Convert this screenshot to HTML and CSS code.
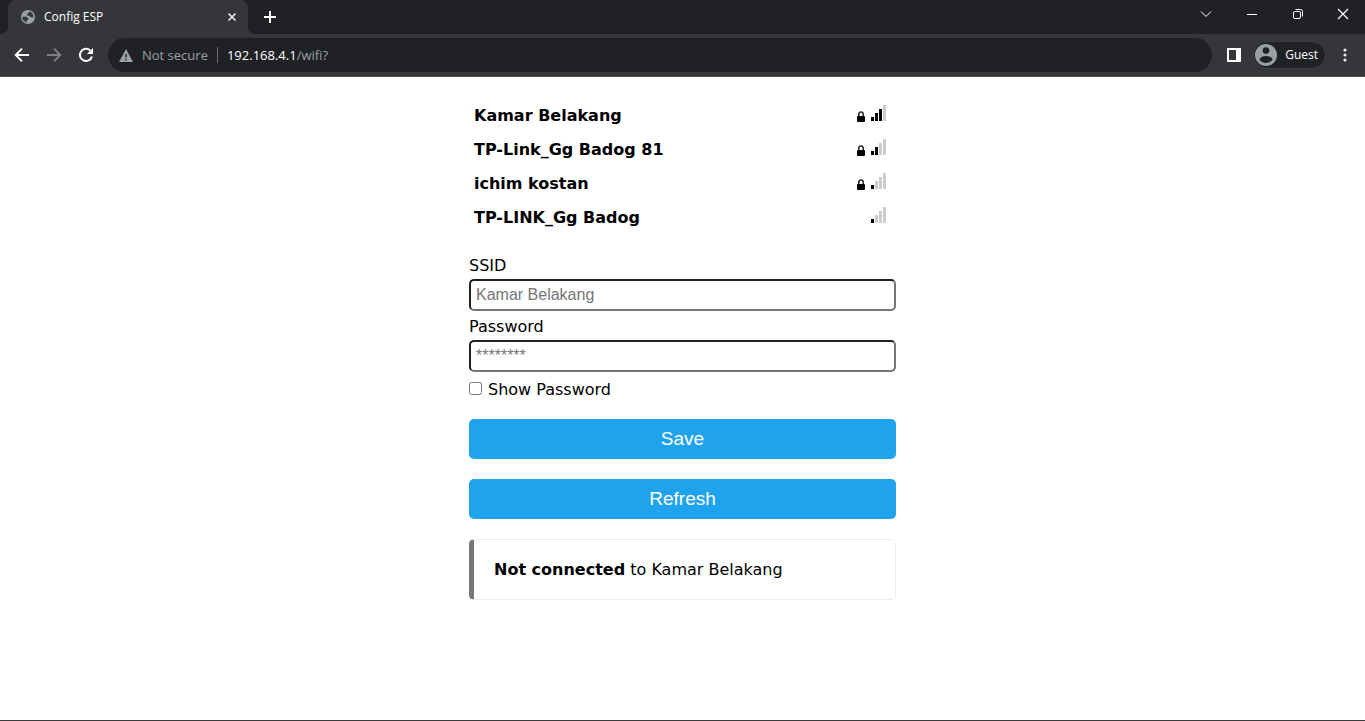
FILE: index.html
```html
<!DOCTYPE html>
<html lang="en">
<head>
<meta charset="utf-8">
<meta name="viewport" content="width=device-width, initial-scale=1">
<title>Config ESP</title>
<link rel="stylesheet" href="styles.css">
</head>
<body>
<header class="browser">
  <div class="tabstrip">
    <div class="tab">
      <svg class="favicon" width="14" height="14" viewBox="0 0 14 14" aria-hidden="true"><circle cx="7" cy="7" r="7" fill="#9aa0a6"/><path d="M8 1.400 7.600 3 6 4v1.500l2.200.3 1.300 1.400h2.800A5.600 5.600 0 0 0 8 1.400zM1.400 6.800h4l1.800 1.500v1.400l-1.500.9v1.800A5.600 5.600 0 0 1 1.400 6.800z" fill="#35363a"/></svg>
      <span class="tab-title">Config ESP</span>
      <button class="icon-btn tab-close" type="button" aria-label="Close tab"><svg width="16" height="16" viewBox="0 0 16 16"><path d="M4.500 4.500l7 7M11.500 4.500l-7 7" stroke="#e8eaed" stroke-width="1.700"/></svg></button>
    </div>
    <button class="icon-btn new-tab" type="button" aria-label="New tab"><svg width="28" height="28" viewBox="0 0 28 28"><path d="M14 8v12M8 14h12" stroke="#fff" stroke-width="2"/></svg></button>
    <div class="window-controls">
      <button class="icon-btn win-btn" type="button" aria-label="Search tabs"><svg width="12" height="12" viewBox="0 0 12 12"><path d="M1 3.500l5 5 5-5" fill="none" stroke="#fff"/></svg></button>
      <button class="icon-btn win-btn" type="button" aria-label="Minimize"><svg width="12" height="12" viewBox="0 0 12 12"><path d="M1 6.500h10" stroke="#fff"/></svg></button>
      <button class="icon-btn win-btn" type="button" aria-label="Restore"><svg width="12" height="12" viewBox="0 0 12 12" fill="none" stroke="#fff"><rect x="1.500" y="3.500" width="7" height="7" rx="1.500"/><path d="M3.500 1.500h5a2 2 0 0 1 2 2v5"/></svg></button>
      <button class="icon-btn win-btn" type="button" aria-label="Close"><svg width="12" height="12" viewBox="0 0 12 12"><path d="M1 1l10 10M11 1L1 11" stroke="#fff" stroke-width="1.200"/></svg></button>
    </div>
  </div>
  <div class="toolbar">
    <button class="icon-btn nav-btn" type="button" aria-label="Back"><svg width="16" height="16" viewBox="0 0 16 16"><path d="M15 8H2M8 1.700L1.700 8 8 14.300" fill="none" stroke="#fff" stroke-width="1.900"/></svg></button>
    <button class="icon-btn nav-btn" type="button" aria-label="Forward"><svg width="16" height="16" viewBox="0 0 16 16"><path d="M1 8h13M8 1.700L14.300 8 8 14.300" fill="none" stroke="#808185" stroke-width="1.900"/></svg></button>
    <button class="icon-btn nav-btn" type="button" aria-label="Reload"><svg width="16" height="16" viewBox="0 0 16 16"><path d="M13.900 9.500A6.100 6.100 0 1 1 12.300 3.600" fill="none" stroke="#fff" stroke-width="2"/><path d="M15 1v6H9z" fill="#fff"/></svg></button>
    <div class="address">
      <svg width="14" height="13" viewBox="0 0 14 13" aria-hidden="true"><path d="M7 0l7 13H0z" fill="#9aa0a6"/><path d="M6.300 5h1.400v3.600H6.300zM6.300 9.800h1.400v1.400H6.300z" fill="#202124"/></svg>
      <span class="security">Not secure</span>
      <span class="url"><span class="host">192.168.4.1</span>/wifi?</span>
    </div>
    <button class="icon-btn panel-btn" type="button" aria-label="Side panel"><svg width="14" height="14" viewBox="0 0 14 14"><path fill-rule="evenodd" d="M0 0h14v14H0zM2 2v10h7V2z" fill="#fff"/></svg></button>
    <button class="profile" type="button"><svg width="22" height="22" viewBox="0 0 22 22" aria-hidden="true"><circle cx="11" cy="11" r="11" fill="#9aa0a6"/><circle cx="11" cy="6.600" r="3.300" fill="#202124"/><path d="M4.400 15.500c1.600-4.600 11.600-4.600 13.200 0-2.500 4.500-10.700 4.500-13.200 0z" fill="#202124"/></svg><span>Guest</span></button>
    <button class="icon-btn menu-btn" type="button" aria-label="Menu"><svg width="4" height="14" viewBox="0 0 4 14" fill="#e8eaed"><circle cx="2" cy="2" r="1.600"/><circle cx="2" cy="7" r="1.600"/><circle cx="2" cy="12" r="1.600"/></svg></button>
  </div>
</header>
<main class="page">
  <div class="config">
    <ul class="networks">
      <li class="network"><a class="ssid" href="#ssid">Kamar Belakang</a><svg class="lock" width="8" height="11" viewBox="0 0 8 11" role="img" aria-label="Secured"><path d="M1.800 6V3.200a2.200 2.200 0 0 1 4.400 0V6" fill="none" stroke="#222" stroke-width="1.500"/><rect y="5" width="8" height="6" rx="1"/></svg><span class="signal level-3"><i></i><i></i><i></i><i></i></span></li>
      <li class="network"><a class="ssid" href="#ssid">TP-Link_Gg Badog 81</a><svg class="lock" width="8" height="11" viewBox="0 0 8 11" role="img" aria-label="Secured"><path d="M1.800 6V3.200a2.200 2.200 0 0 1 4.400 0V6" fill="none" stroke="#222" stroke-width="1.500"/><rect y="5" width="8" height="6" rx="1"/></svg><span class="signal level-2"><i></i><i></i><i></i><i></i></span></li>
      <li class="network"><a class="ssid" href="#ssid">ichim kostan</a><svg class="lock" width="8" height="11" viewBox="0 0 8 11" role="img" aria-label="Secured"><path d="M1.800 6V3.200a2.200 2.200 0 0 1 4.400 0V6" fill="none" stroke="#222" stroke-width="1.500"/><rect y="5" width="8" height="6" rx="1"/></svg><span class="signal level-1"><i></i><i></i><i></i><i></i></span></li>
      <li class="network"><a class="ssid" href="#ssid">TP-LINK_Gg Badog</a><span class="signal level-1"><i></i><i></i><i></i><i></i></span></li>
    </ul>
    <form class="form">
      <label class="label" for="ssid">SSID</label>
      <input class="field" id="ssid" type="text" placeholder="Kamar Belakang">
      <label class="label" for="password">Password</label>
      <input class="field" id="password" type="password" placeholder="********">
      <div class="check"><input class="checkbox" id="show" type="checkbox"><label for="show">Show Password</label></div>
      <button class="action" type="button">Save</button>
      <button class="action" type="button">Refresh</button>
    </form>
    <p class="status"><strong>Not connected</strong> to Kamar Belakang</p>
  </div>
</main>
</body>
</html>
```
FILE: styles.css
```css
* { box-sizing: border-box; }

body {
  margin: 0;
  min-height: 100vh;
  display: flex;
  flex-direction: column;
  background: #fff;
  color: #000;
  border-bottom: 1px solid #3c3c3f;
  font: 16px/20px Verdana, "DejaVu Sans", sans-serif;
}

svg { display: block; flex: none; }

.browser {
  color: #fff;
  font: 12px/16px "Segoe UI", "Open Sans", sans-serif;
}

.icon-btn {
  display: flex;
  align-items: center;
  justify-content: center;
  padding: 0;
  border: 0;
  background: none;
}

.tabstrip {
  display: flex;
  height: 34px;
  padding-left: 8px;
  background: #202124;
}

.tab {
  position: relative;
  display: flex;
  align-items: center;
  width: 240px;
  padding: 0 8px 0 13px;
  border-radius: 8px 8px 0 0;
  background: #35363a;
}

.tab::before,
.tab::after {
  content: "";
  position: absolute;
  bottom: 0;
  width: 8px;
  height: 8px;
}

.tab::before {
  right: 100%;
  background: radial-gradient(circle at 0 0, #202124 8px, #35363a 8px);
}

.tab::after {
  left: 100%;
  background: radial-gradient(circle at 100% 0, #202124 8px, #35363a 8px);
}

.tab-title { flex: 1; margin-left: 9px; }

.new-tab { margin-left: 8px; width: 28px; }

.window-controls { display: flex; margin-left: auto; }

.win-btn { width: 46px; height: 28px; }
.win-btn:last-child { width: 44px; }

.toolbar {
  display: flex;
  align-items: center;
  height: 43px;
  padding: 0 8px 0 6px;
  background: #35363a;
  border-bottom: 1px solid #4d4e52;
}

.nav-btn { width: 32px; height: 32px; }

.address {
  flex: 1;
  display: flex;
  align-items: center;
  height: 34px;
  margin-left: 6px;
  padding-left: 11px;
  border-radius: 17px;
  background: #202124;
  color: #9aa0a6;
  font-size: 13px;
}

.security {
  margin-left: 9px;
  padding-right: 9px;
  border-right: 1px solid #6b6e73;
}

.url { margin-left: 9px; }

.host { color: #fff; }

.panel-btn { width: 14px; margin-left: 15px; }

.profile {
  display: flex;
  align-items: center;
  gap: 8px;
  height: 28px;
  margin-left: 12px;
  padding: 0 7px 0 1px;
  border: 1px solid #3f4044;
  border-radius: 14px;
  background: #202124;
  color: #fff;
  font: inherit;
}

.menu-btn { width: 24px; height: 28px; margin-left: 7px; }

.page {
  flex: 1;
  display: flex;
  justify-content: center;
  padding: 21px 16px;
}

.config { width: 100%; max-width: 427px; }

.networks {
  margin: 0 0 16px;
  padding: 0;
  list-style: none;
}

.network {
  display: flex;
  align-items: center;
  height: 34px;
  padding: 0 10px 0 5px;
}

.ssid {
  flex: 1;
  padding-top: 2px;
  color: inherit;
  font-weight: bold;
  text-decoration: none;
}

.lock { margin: 2px 6px 0 0; }

.signal {
  display: flex;
  align-items: flex-end;
  gap: 1px;
  height: 16px;
  margin-bottom: 4px;
}

.signal i { width: 3px; background: #ccc; }
.signal i:nth-child(1) { height: 4px; }
.signal i:nth-child(2) { height: 8px; }
.signal i:nth-child(3) { height: 12px; }
.signal i:nth-child(4) { height: 16px; }

.level-1 i:nth-child(-n+1),
.level-2 i:nth-child(-n+2),
.level-3 i:nth-child(-n+3) { background: #000; }

.form { display: flex; flex-direction: column; }

.label { height: 29px; line-height: 31px; }

.field {
  width: 100%;
  height: 32px;
  padding: 0 5px 1px;
  border: 2px solid;
  border-color: #212121 #767676 #767676 #212121;
  border-radius: 5px;
  background: #fff;
  font: 16px "Liberation Sans", Arial, sans-serif;
}

.field::placeholder { color: #757575; }

.check {
  display: flex;
  align-items: center;
  gap: 6px;
  height: 33px;
  margin-bottom: 14px;
}

.check label { padding-top: 2px; }

.checkbox { width: 13px; height: 13px; margin: 0; }

.action {
  height: 40px;
  margin-bottom: 20px;
  padding: 0 0 1px;
  border: 0;
  border-radius: 5px;
  background: #1fa3ec;
  color: #fff;
  font: 19px "Liberation Sans", Arial, sans-serif;
}

.status {
  margin: 0;
  padding: 20px 20px 19px;
  border: 1px solid #eee;
  border-left: 5px solid #777;
  border-radius: 5px;
}
```
